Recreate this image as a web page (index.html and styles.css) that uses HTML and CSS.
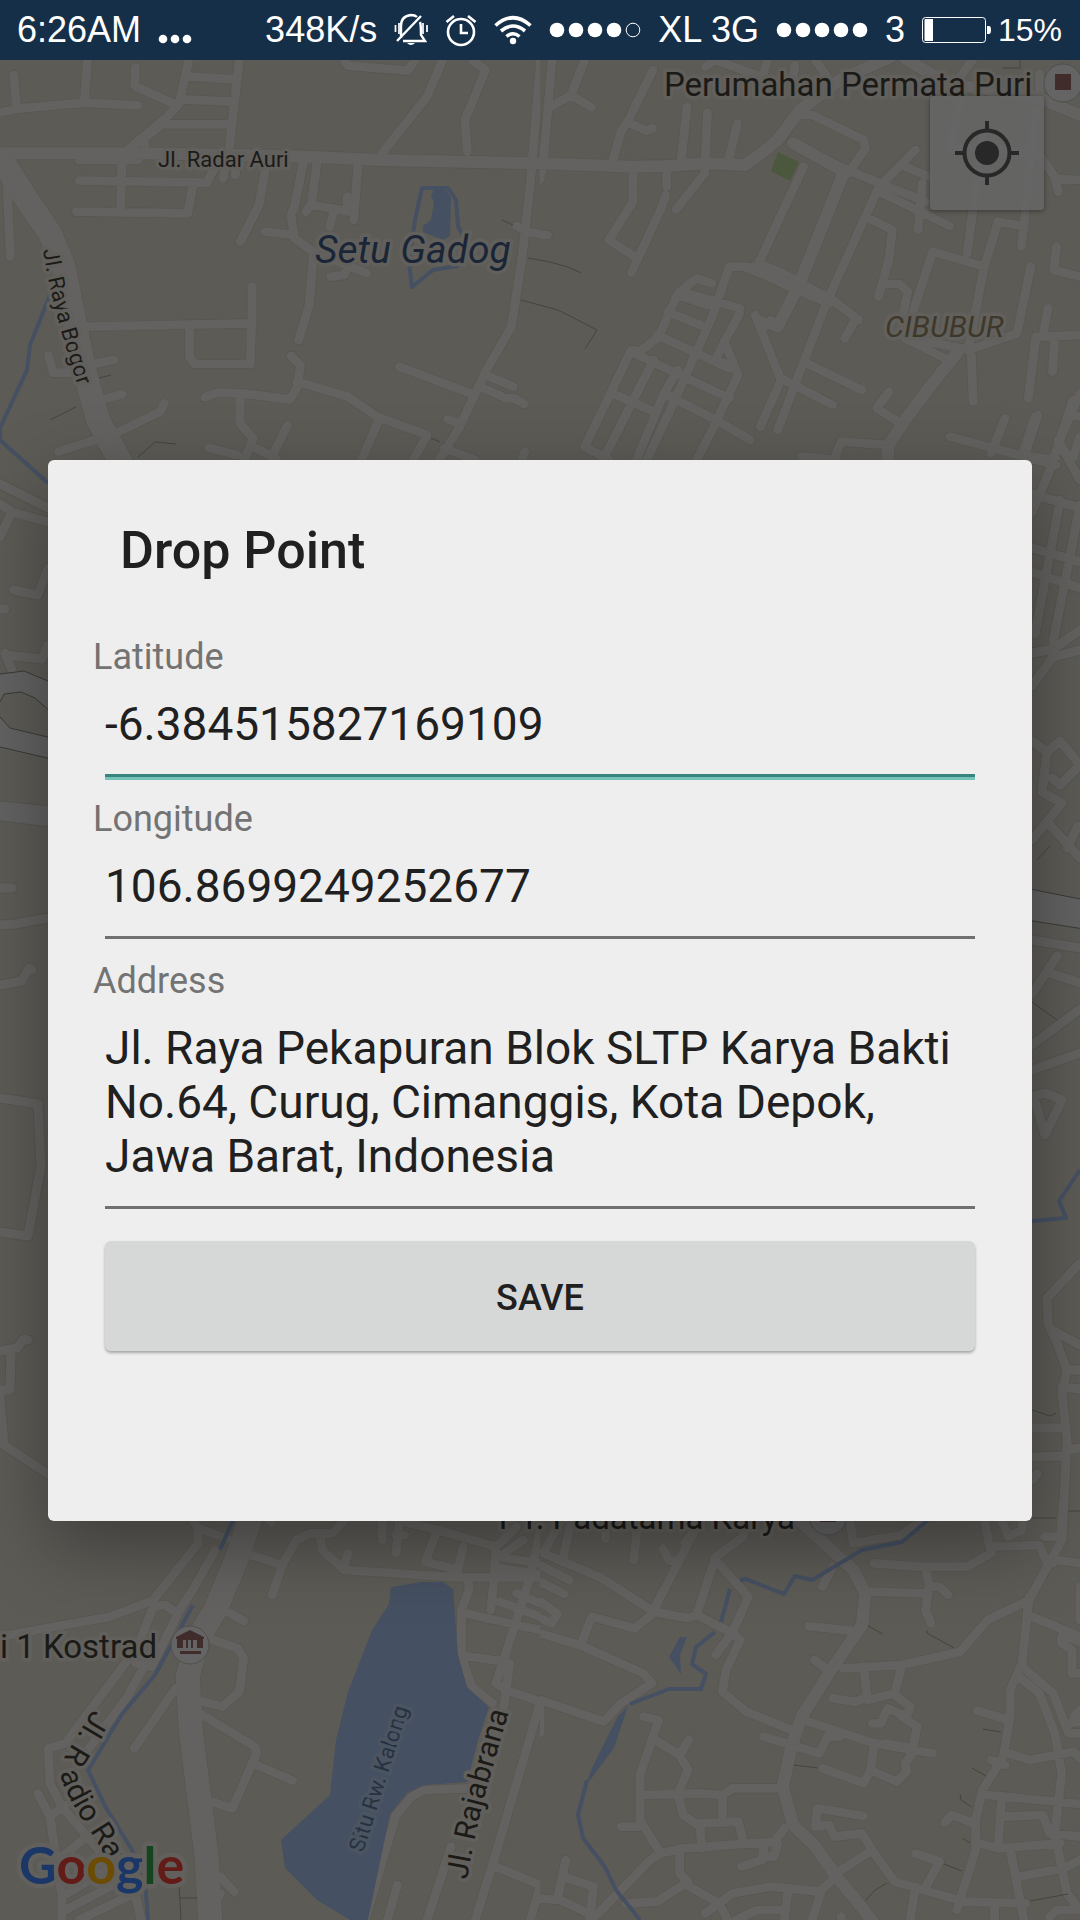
FILE: index.html
```html
<!DOCTYPE html>
<html lang="en">
<head>
<meta charset="utf-8">
<meta name="viewport" content="width=device-width, initial-scale=1">
<title>Drop Point</title>
<link rel="stylesheet" href="styles.css">
</head>
<body>
<header class="status">
  <div class="status-group">
    <span>6:26AM</span>
    <svg class="more" width="34" height="10" viewBox="0 0 34 10"><circle cx="5" cy="5" r="4.3"/><circle cx="17" cy="5" r="4.3"/><circle cx="29" cy="5" r="4.3"/></svg>
  </div>
  <div class="status-group">
    <span>348K/s</span>
    <svg width="34" height="34" viewBox="0 0 34 34" fill="none" stroke="#fff" stroke-width="2.4"><path d="M7 25V13Q7 3 17 2Q21 2 23 4M26 9Q27 12 27 22L31 28H9M27 3L3 28"/><path d="M1.500 12v7M5 10v11M29 10v11M33 12v7" stroke-width="1.700"/><path d="M13 30h8q-4 4-8 0z" fill="#fff" stroke="none"/></svg>
    <svg width="32" height="34" viewBox="0 0 32 34" fill="none" stroke="#fff" stroke-width="2.600"><circle cx="16" cy="19" r="13"/><path d="M16 11v9h7M1.500 9L9 3M30.500 9L23 3"/></svg>
    <svg width="38" height="30" viewBox="0 0 38 30" fill="none" stroke="#fff" stroke-width="3.600"><path d="M1.500 10.500Q19-5 36.500 10.500M7 16Q19 6 31 16M12.500 21.500Q19 16 25.500 21.500"/><circle cx="19" cy="26" r="3.200" fill="#fff" stroke="none"/></svg>
    <svg width="92" height="16" viewBox="0 0 92 16" fill="#fff"><circle cx="8" cy="8" r="7.300"/><circle cx="27" cy="8" r="7.300"/><circle cx="46" cy="8" r="7.300"/><circle cx="65" cy="8" r="7.300"/><circle cx="84" cy="8" r="6.800" fill="none" stroke="#fff"/></svg>
    <span>XL 3G</span>
    <svg width="92" height="16" viewBox="0 0 92 16" fill="#fff"><circle cx="8" cy="8" r="7.300"/><circle cx="27" cy="8" r="7.300"/><circle cx="46" cy="8" r="7.300"/><circle cx="65" cy="8" r="7.300"/><circle cx="84" cy="8" r="7.300"/></svg>
    <span>3</span>
    <span class="battery">
      <svg width="70" height="26" viewBox="0 0 70 26"><rect x=".500" y=".500" width="63" height="25" rx="3" fill="none" stroke="#fff"/><path d="M2.500 3q0-1 1-1H11v22H3.500q-1 0-1-1zM65 9h2q2 0 2 4t-2 4h-2z" fill="#fff"/></svg>
      15%
    </span>
  </div>
</header>
<main class="screen">
  <svg class="map" viewBox="0 60 1080 1860" preserveAspectRatio="xMidYMin slice" role="img" aria-label="Map">
    <defs>
      <symbol id="nw" viewBox="0 0 1568 1200" preserveAspectRatio="none">
        <path class="r" d="M40 45L48 145M0 157L60 145L245 128L400 136M254 0L245 128M393 22L391 78L512 135M548 0L520 132L480 175L370 270M695 0L665 270M550 50L685 58M530 118L675 125M470 193L665 193L470 193L420 235V270M1000 0L1010 17L1185 32L1205 0M1285 0L1240 110L1105 285M1370 0L1410 30L1350 180L1357 275M230 300H400M230 362L600 368L620 330M354 310L350 455M222 455L545 460L560 375M648 355L655 310M683 345L685 320M770 330L752 435L698 545M880 310L855 440L845 465L855 535L910 575L1065 640M770 515L850 525M960 650L1000 645L1010 615M920 310L905 430L888 455M905 435L1020 455M1040 310L1027 480M1008 410V455M968 460L957 500M1568 0V20L1540 370L1515 600L1485 800L1410 935L1335 1100L1275 1200M1500 498L1530 515L1568 522M910 580L898 735L867 840M250 800L730 790L727 912H565L550 890V805M732 680V790M140 885L155 938H215M270 912L330 900M300 1018L355 1002M335 1120L465 1055L477 1030M170 1175L290 1135M845 888L873 915L862 985L842 1018L700 1000L630 998L595 1012M862 965L1010 1010L1095 1070L1240 1125L1200 1200M697 1005V1090L735 1135L710 1200M835 1095L790 1190M605 1163L690 1185M735 1160L800 1195M1100 1080L1050 1200M1160 920L1365 1000M1410 945L1490 980M1395 980L1470 1015H1495L1522 1032M1300 1078L1330 1090M1290 1165L1380 1200M1524 1175L1515 1200M20 360L30 590"/>
        <path class="m" d="M0 280H400L900 290L1100 300L1568 310"/>
        <path class="w" d="M-25 290L15 315L85 430L145 520L185 620L215 780L245 930L285 1080L355 1215"/>
      </symbol>
      <symbol id="ne" viewBox="0 0 1568 1200" preserveAspectRatio="none">
        <path class="r" d="M35 0L10 300L0 360M130 0L90 105L150 142M90 105L30 140M328 30L255 185L235 215L212 300M260 190L310 212L328 204M427 140L410 300M486 158L478 340L395 448M573 190L548 300M270 335V425L200 540L275 590M368 335V380M365 405L350 450L265 638M0 525H22M480 20L510 0L640 50M660 0L650 40M800 0L840 60M740 15L735 50M1090 270L985 380M1060 320L1130 350M1110 370L1098 510M985 395L1190 498M765 165L790 165L940 240L945 265L895 340M735 250L880 325L1120 425M765 320L635 610L705 640L850 720L925 780M980 390L835 720L690 1110M965 480L1023 510L1013 600L983 710M1005 672H1045L1068 695L1055 760M1290 200L1240 580M1440 150L1398 560M1385 495L1330 485L1290 620L1140 575L1085 750M1290 620L1245 860M1220 130L1190 270L1290 260L1450 285L1495 350L1505 395M1495 355L1568 360M1500 560L1492 630L1568 650M1425 620L1385 820L1245 870L1060 830M1475 745L1460 830L1568 825M1440 830L1418 1015M1495 830L1488 935M1185 900L1060 835M1252 880L1258 1025M1013 995L978 1045L1055 1095M915 780L885 835M775 910L935 990M700 955L850 1035M625 765L665 870L700 960L640 1100M670 640L600 620H550L500 770L365 1080L310 1200M600 625L710 665M580 745L430 700M500 670L455 655L400 700L345 830L290 875L265 870L130 1160L200 1200M400 705L485 735M370 755L465 795M340 825L550 925M275 880L550 1015M580 760L535 845L575 945L500 1110L455 1200M535 845L510 900L560 920M680 800L640 780M400 930L360 1000L280 1200M330 900L190 1185M210 1000L320 1050M360 1000L520 1085L610 1140M650 800L670 780M1190 1130L1390 1185L1500 1200M1350 1075L1310 1180M1437 1070L1400 1185M1568 1000L1505 1150L1540 1200M1540 1060L1568 1070M760 1190L860 1200M860 1180L875 1145L1010 1155M1255 0L1200 80M1450 40V110M1568 1130L1545 1200"/>
        <path class="m" d="M0 310L270 320L370 318L480 310L595 315L655 270L690 240L755 150L870 60L1020 -10M1060 -5L1180 70L1440 110L1568 165M885 330L750 680L690 800M620 625L760 690L840 725M1210 880L1140 970L1060 1080L1010 1160V1200M735 250L885 335"/>
      </symbol>
      <symbol id="sw" viewBox="0 0 1568 1260" preserveAspectRatio="none">
        <path class="r" d="M560 60L575 85L660 115M575 85V130L445 300L320 350L0 410M625 150L560 270L515 340L480 315L445 320L400 440L190 730L140 745L145 850L180 920L310 1080L390 1170L410 1260M515 345L440 500L420 495L370 590L240 770M440 500L395 490M510 565L390 745M635 320L708 363M605 415L690 445L707 475L695 575L645 620L570 600M580 640L740 740L745 760L675 925L615 905M735 790L850 842M715 160L820 195L790 285M820 195L860 120L900 100H965L1000 60M930 110L935 150L1000 210L1330 232H1568M1010 160L1000 200M1110 60V120M1160 60L1150 160M1150 105H1175M1170 65L1270 90L1440 140L1500 80M1270 90L1235 185L1330 210L1345 140M1440 140L1435 230L1425 330M1360 240L1362 270L1340 330V470L1370 560L1430 610M1350 340L1568 390M1330 465L1470 485M1520 120L1450 170L1568 190M1450 205L1568 222M1450 305L1568 350M1568 90L1540 230L1440 550L1470 570L1568 605M1500 280L1568 310M1480 490L1460 640M1370 865L1230 870L1195 890L1150 945L1060 1260M1568 610L1440 1060L1380 1260M1310 1040L1240 1260M1440 1100L1568 1155M1154 1155L1125 1260M1568 1160L1540 1260M110 880L145 950L180 1190V1260M145 950L190 915M180 1070L240 1020M180 1190L310 1110M190 1230L320 1160M230 1260L390 1180M640 1130L680 1175M600 1260L640 1180M780 60L790 68"/>
        <path class="w" d="M735 30L690 170L625 330L575 415L545 530L555 700L600 1070L612 1290"/>
      </symbol>
      <symbol id="se" viewBox="0 0 1568 1260" preserveAspectRatio="none">
        <path class="r" d="M60 60L10 160L180 235L330 335L430 355L455 345L560 400L582 420L540 510L530 575L600 635L730 690M90 65L65 185M190 60V115M285 60L272 180M357 145L375 182H400M470 60L420 130M450 90L330 330M600 60L590 110L510 170L455 345M510 180L605 290L560 395L510 465M0 195L85 240M0 245L70 282M0 305L50 340L35 370L0 355M0 400L115 435L300 520L325 550L235 610L185 665L0 600M120 430L150 350L275 385L340 330M0 620V700M300 650L345 660L325 720L290 825V980H235M335 720L405 765L432 720M405 765L430 810L400 880L415 945L465 980L470 1045M310 885L460 880L530 885L560 865H690M530 890V960M460 970L575 965L590 1020M290 960L350 1060L420 1045L680 1025L710 985M350 1060L320 1080L160 1250M650 1040L645 1080L585 1100M690 1030L680 1070H650M405 1060V1120L430 1145L340 1205L250 1210M425 1155L520 1210L560 1180L670 1160L810 1175L860 1130M520 1210L480 1240M520 1210L545 1260M720 1170L710 1260M570 1260L630 1230H700M815 1180L790 1260M75 1080L50 1200L0 1195M65 1130L155 1160L145 1260M50 1195L160 1250M875 1250V1260M850 200L820 260M900 60L910 130L1050 105L1110 60M970 190L1100 200H1240L1310 160L1290 60M1310 140L1450 135L1470 185L1490 190M1340 60L1360 110L1400 90V60M1520 0L1510 130L1420 300L1300 360L1220 455L1050 495L880 505M1465 110H1510M1500 180L1568 190M960 275L1110 280M1120 200L1130 260L1120 330L1135 370M1130 260L1160 260L1185 285M780 378L900 392M797 480L830 505M940 500L950 590L915 605L850 595M1050 500L1030 580L950 600M1030 585L1075 620L1065 650L1010 625L990 670H965M1050 650L1095 680L1080 760L1060 790L1065 815L1035 845L960 810M780 665L970 730L1140 760M650 710L810 760L835 710H870M970 735L960 810L940 850L820 805M1000 730L1080 745M940 948L805 925L800 980L840 975L855 1010L935 1000L970 1060L1030 1145L1230 1205L1410 1210M965 1050L860 1120M1090 1060L1160 1085L1120 1160M1090 1160L1075 1260M1420 290L1400 490L1365 570V650L1345 770L1285 870L1265 960V1050L1210 1230M1430 350L1568 410M1568 260V360M1400 500L1490 580L1535 700L1568 700M1390 530L1450 580L1495 700L1515 820L1495 1000L1530 1180L1568 1230M1270 632L1360 660M1360 760L1420 780L1550 755L1568 775M1535 670L1568 665M1568 630L1550 650M1310 780L1350 795M1300 885L1568 912M1175 968L1195 945L1260 970M1340 900L1330 1040M1345 950L1460 945L1480 1000L1568 1010M1275 1030L1330 1045L1510 1030M1365 1045L1405 1260M1390 1130L1520 1105L1568 1080M1515 410V430L1545 450V520H1568M1530 410L1568 425M1320 1220V1260M1480 1250L1500 1230H1568"/>
        <path class="m" d="M740 50L810 115L910 210L945 280L935 375L845 510L760 650L730 740L705 860L735 975L800 1040L860 1130L910 1190L970 1270"/>
      </symbol>
      <g id="sides">
        <path class="s" d="M0 484L48 508M0 504L12 512L48 522M12 512L0 537M14 590L38 595L48 568M0 609H5M5 653L14 675M5 655L42 659L48 645M0 888H12M0 925L15 924L48 918M0 985L22 981L29 968L32 970M0 1098L38 1104L41 1166L28 1236L0 1232M0 1351L17 1348L24 1339L28 1340M11 1353L10 1390H0M0 1397L4 1445L48 1474M1020 470L1038 415M1032 459L1056 465M1073 400L1050 470L1032 512M1058 440L1080 480M1032 494L1080 508M1032 548L1080 562M1032 572L1080 588M1060 500L1035 634M1080 505L1053 642M1032 653L1053 649L1080 630M1032 686L1053 657L1080 650M1032 741L1047 752L1042 792L1062 803L1032 840M1047 752L1060 741L1080 765L1060 785L1052 778M1047 822L1080 858M1067 848L1078 826M1032 940L1080 948M1032 994L1057 956M1047 972L1080 983M1032 1045L1080 1009M1032 1070L1080 1053M1032 1097L1045 1093L1062 1100L1045 1135L1036 1104M1080 1263L1047 1298L1048 1323L1057 1343L1067 1370L1062 1393L1067 1440L1062 1540M1052 1330L1080 1345M1067 1370H1080M1062 1387L1080 1389M1032 1428H1062M1032 1457L1063 1456M1067 1450L1080 1448M1032 1480L1037 1474"/>
      </g>
      <g id="network">
        <use href="#nw" x="0" y="60" width="540" height="400"/>
        <use href="#ne" x="540" y="60" width="540" height="400"/>
        <use href="#sw" x="0" y="1500" width="540" height="420"/>
        <use href="#se" x="540" y="1500" width="540" height="420"/>
        <use href="#sides"/>
      </g>
      <path id="bogor" d="M43 250Q52 310 84 404"/>
      <path id="radio-top" d="M93 1709L58 1768"/>
      <path id="radio-bottom" d="M60 1773Q65 1794 85 1824Q109 1858 128 1904"/>
      <path id="kalong" d="M363 1853L416 1684"/>
      <path id="raja" d="M467 1880Q477 1820 492 1770L515 1690"/>
    </defs>
    <path class="land" d="M0 60H1080V1920H0z"/>
    <use class="casing" href="#network"/>
    <use class="surface" href="#network"/>
    <path class="park" d="M778 152L799 162L790 181L771 171z"/>
    <g class="water">
      <path d="M435 187L445 188L451 198L450 236L443 240L423 232V226L431 220L434 202L431 195zM391 1587L422 1582H443L453 1589L458 1655L467 1687L489 1707L478 1740L467 1782L425 1785L407 1793L390 1814L368 1920H350L317 1900L285 1868L281 1840L330 1795L336 1740L348 1692L372 1630L389 1604zM680 1637H687L680 1655L681 1674L669 1657zM628 1706L614 1748L585 1787L592 1768L618 1716z"/>
      <path class="stream" d="M422 188H448L456 200L458 226L468 245L467 258L457 266L433 270L412 287L409 262L415 220zM50 295L30 345L27 370L0 428V440L48 483M233 1520L220 1550M193 1605L155 1675L122 1714L88 1770L105 1806L132 1850L145 1880L148 1920M1080 1170L1059 1201L1066 1218L1032 1221M928 1520L902 1542L862 1550L812 1580L795 1576L784 1594L746 1579L740 1580M730 1589L721 1622M715 1632L696 1647L692 1664L706 1674L701 1689L669 1689L630 1704M587 1780L578 1815L583 1838L605 1867L616 1890L640 1920"/>
    </g>
    <g class="highway">
      <path d="M-9 674H0L24 671L60 686V720L35 698L21 692L4 694L0 702H-9zM-9 717H0L10 728L60 740V761L0 747H-9zM1020 887L1090 901V930L1020 919z"/>
      <path class="plain" d="M-9 800L60 807V828L-9 820z"/>
    </g>
    <path class="trail" d="M502 220L513 225M528 258L550 262L568 267L581 273M521 300L558 310L597 330L585 349M99 378L111 375M50 420L76 407M138 457L155 442L176 444M431 438L440 442M1002 68H1020V60M1037 860L1050 846M1032 1002L1057 1020M1032 1410L1050 1416L1056 1413M1032 1518H1056M1068 1511H1080M868 1626L883 1634M927 1630V1633L954 1648M983 1729L1001 1732M794 1765L818 1768M972 1768L986 1776M960 1794L961 1800L972 1807M962 1838L970 1843M944 1864L962 1871M866 1900L875 1890L887 1883M1030 1901L1068 1894M179 1885L181 1920M180 1898H197"/>
    <g class="pin">
      <circle cx="1063" cy="83" r="19"/><circle cx="190" cy="1645" r="19"/><circle cx="828" cy="1516" r="19"/>
    </g>
    <path class="poi" d="M1055 74h16v16h-16zM820 1506h16v16h-16zM190 1630l14 7v2h-1v9h-6v-8h-4v8h-2v-8h-3v8h-2v-8h-3v8h-6v-9h-1v-2zM180 1651h21v3h-21z"/>
    <text class="label big" x="664" y="96">Perumahan Permata Puri</text>
    <text class="label small" x="158" y="167">Jl. Radar Auri</text>
    <text class="label lake" x="315" y="263">Setu Gadog</text>
    <text class="label area" x="885" y="337">CIBUBUR</text>
    <text class="label small"><textPath href="#bogor">Jl. Raya Bogor</textPath></text>
    <text class="label big end" x="157" y="1658">ri 1 Kostrad</text>
    <text class="label big end" x="795" y="1529">PT. Padatama Karya</text>
    <text class="label road"><textPath href="#radio-top">Jl. R</textPath></text>
    <text class="label road"><textPath href="#radio-bottom">adio Raya</textPath></text>
    <text class="label pond"><textPath href="#kalong">Situ Rw. Kalong</textPath></text>
    <text class="label road"><textPath href="#raja">Jl. Rajabrana</textPath></text>
    <text class="google" x="19" y="1884"><tspan class="blue">G</tspan><tspan class="red">o</tspan><tspan class="gold">o</tspan><tspan class="blue">g</tspan><tspan class="green">l</tspan><tspan class="red">e</tspan></text>
  </svg>
  <button class="locate" type="button" aria-label="My location">
    <svg width="66" height="66" viewBox="0 0 66 66"><circle cx="33" cy="33" r="22.500"/><path d="M33 1v10M33 55v10M1 33h10M55 33h10"/><circle class="dot" cx="33" cy="33" r="12"/></svg>
  </button>
  <form class="dialog" role="dialog" aria-labelledby="title">
    <h1 id="title">Drop Point</h1>
    <div class="field active">
      <label for="lat">Latitude</label>
      <input id="lat" type="text" value="-6.384515827169109">
    </div>
    <div class="field">
      <label for="lng">Longitude</label>
      <input id="lng" type="text" value="106.8699249252677">
    </div>
    <div class="field">
      <label for="addr">Address</label>
      <textarea id="addr" rows="3">Jl. Raya Pekapuran Blok SLTP Karya Bakti No.64, Curug, Cimanggis, Kota Depok, Jawa Barat, Indonesia</textarea>
    </div>
    <button class="save" type="button">SAVE</button>
  </form>
</main>
</body>
</html>
```
FILE: styles.css
```css
* { box-sizing: border-box; }

body {
  margin: 0;
  min-height: 100vh;
  display: flex;
  flex-direction: column;
  font-family: Roboto, "Noto Sans", sans-serif;
  color: #202020;
  background: #5d5b56;
}

/* Status bar */
.status {
  display: flex;
  justify-content: space-between;
  align-items: center;
  height: 60px;
  padding: 0 18px 0 17px;
  background: #162f49;
  color: #fff;
  font: 36px/60px "Liberation Sans", Arial, sans-serif;
  white-space: nowrap;
}
.status-group { display: flex; align-items: center; gap: 17px; }
.status svg { flex: none; }
.more { fill: #fff; margin-top: 18px; }
.battery { display: flex; align-items: center; gap: 6px; font-size: 32px; }

/* Map */
.screen {
  position: relative;
  flex: 1;
  display: flex;
  align-items: center;
  padding: 48px;
  overflow: hidden;
}
.map { position: absolute; inset: 0; width: 100%; height: 100%; }
.land { fill: #5d5b56; }
.park { fill: #4c583e; }
.casing { --edge: 4px; --edge-side: 2px; stroke: #585651; }
.surface { --edge: 0px; --edge-side: 0px; stroke: #636260; }
.r, .m, .w, .s { fill: none; stroke-linecap: round; stroke-linejoin: round; }
.r { stroke-width: calc(26px + var(--edge)); }
.m { stroke-width: calc(36px + var(--edge)); }
.w { stroke-width: calc(70px + var(--edge)); }
.s { stroke-width: calc(9px + var(--edge-side)); }
.water { fill: #455062; }
.stream { fill: none; stroke: #455062; stroke-width: 4px; stroke-linejoin: round; }
.highway { fill: #626262; stroke: #3a3a37; stroke-width: 1px; }
.plain { stroke: #575550; }
.trail { fill: none; stroke: #45443d; stroke-width: 1px; }
.pin { fill: #646464; stroke: #504f4c; stroke-width: 1px; }
.poi { fill: #402d2b; }

.label {
  fill: #1b1a17;
  stroke: #62605c;
  stroke-width: 7px;
  stroke-linejoin: round;
  paint-order: stroke;
}
.big { font-size: 33px; }
.small { font-size: 22px; }
.road { font-size: 30px; }
.end { text-anchor: end; }
.lake { font-size: 39px; font-style: italic; fill: #1a2637; }
.area { font-size: 30px; font-style: italic; fill: #3e382a; }
.pond { font-size: 22px; fill: #263242; stroke: #4b5461; }
.google {
  font-family: Lato, sans-serif;
  font-size: 52px;
  font-weight: 700;
  stroke: #62605c;
  stroke-width: 9px;
  stroke-linejoin: round;
  paint-order: stroke;
}
.blue { fill: #1b3768; }
.red { fill: #631b17; }
.gold { fill: #6b4c02; }
.green { fill: #15451f; }

.locate {
  position: absolute;
  top: 36px;
  right: 36px;
  width: 114px;
  height: 114px;
  display: grid;
  place-items: center;
  padding: 0;
  border: 0;
  border-radius: 4px;
  background: rgba(102, 102, 102, .8);
  box-shadow: 0 1px 5px rgba(0, 0, 0, .4);
}
.locate svg { fill: none; stroke: #282828; stroke-width: 4px; }
.locate .dot { fill: #282828; stroke: none; }

/* Dialog */
.dialog {
  position: relative;
  width: 100%;
  padding: 60px 57px 170px;
  border-radius: 6px;
  background: #eee;
  box-shadow: 0 24px 72px rgba(0, 0, 0, .35);
}
h1 {
  margin: 0 0 54px 15px;
  font-size: 52px;
  line-height: 62px;
  font-weight: 500;
}
.field { display: flex; flex-direction: column; margin-bottom: 21px; }
.field label {
  margin-left: -12px;
  font-size: 36px;
  line-height: 42px;
  color: #737373;
}
.field input, .field textarea {
  display: block;
  width: 100%;
  margin: 0;
  padding: 19px 0 23px;
  border: 0;
  border-bottom: 3px solid #707070;
  border-radius: 0;
  outline: 0;
  background: none;
  font: 46px/54px Roboto, "Noto Sans", sans-serif;
  color: #202020;
}
.field input { height: 99px; }
.field textarea { height: 207px; resize: none; overflow: hidden; }
.active input { border-color: #37857d; box-shadow: 0 3px #75c2b8; }
.save {
  display: block;
  width: 100%;
  height: 110px;
  margin-top: 32px;
  padding: 4px 0 0;
  border: 0;
  border-radius: 6px;
  background: #d6d8d7;
  box-shadow: 0 2px 3px rgba(0, 0, 0, .3);
  font: 500 36px/42px Roboto, "Noto Sans", sans-serif;
  color: #202020;
}
```
